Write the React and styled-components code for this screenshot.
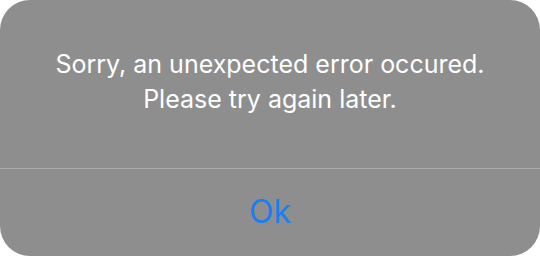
import styled, { createGlobalStyle } from 'styled-components';

const GlobalStyle = createGlobalStyle`
  html, body {
    margin: 0;
    padding: 0;
    background: #ffffff;
  }
  * {
    box-sizing: border-box;
  }
`;

const Dialog = styled.div`
  width: 540px;
  height: 256px;
  border-radius: 30px;
  background-color: #8e8e8e;
  display: flex;
  flex-direction: column;
  overflow: hidden;
  font-family: Inter, 'Open Sans', sans-serif;
`;

const Body = styled.div`
  height: 168px;
  display: flex;
  align-items: center;
  justify-content: center;
  padding-bottom: 4px;
`;

const Message = styled.p`
  margin: 0;
  color: #ffffff;
  font-size: 25px;
  line-height: 35px;
  text-align: center;
`;

const Divider = styled.div`
  height: 1px;
  background-color: #ababab;
`;

const ActionButton = styled.button`
  flex: 1;
  border: none;
  background: transparent;
  color: #1a7ff2;
  font-family: inherit;
  font-size: 32px;
  cursor: pointer;
  padding: 0 0 2px;
`;

function App() {
  return (
    <>
      <GlobalStyle />
      <Dialog>
        <Body>
          <Message>
            Sorry, an unexpected error occured.
            <br />
            Please try again later.
          </Message>
        </Body>
        <Divider />
        <ActionButton>Ok</ActionButton>
      </Dialog>
    </>
  );
}

export default App;
